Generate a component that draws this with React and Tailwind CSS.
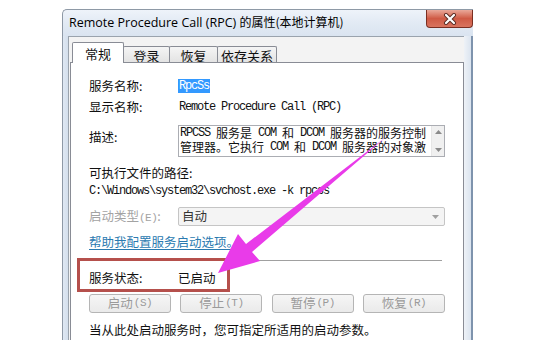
import React from 'react';

const cjkRe = /([\u3000-\u303f\u4e00-\u9fff\uff00-\uffef]+)/;

// SimSun-like mixed text: ascii in mono, cjk runs in the CJK font
const Mixed = ({ text }) =>
    text.split(cjkRe).map((part, i) =>
        cjkRe.test(part) ? (
            <span key={i} className="inline-block h-[14px] align-top font-['Noto_Sans_CJK_SC'] text-[12px] leading-[14px] tracking-normal whitespace-pre">{part}</span>
        ) : (
            <span key={i} className="inline-block h-[14px] align-top leading-[14px] whitespace-pre">{part}</span>
        )
    );

const Tab = ({ label, active, className = '' }) => (
    <div
        className={
            active
                ? `h-[21px] -mb-px flex items-center justify-center bg-white border border-b-0 border-[#898c95] rounded-t-[2px] z-10 ${className}`
                : `h-[17px] mt-[4px] -ml-px flex items-center justify-center bg-gradient-to-b from-[#f5f5f5] to-[#e2e2e2] border border-b-0 border-[#898c95] rounded-t-[2px] ${className}`
        }
    >
        <span className="text-[13px] leading-none text-[#111]">{label}</span>
    </div>
);

const Button = ({ label, hotkey }) => (
    <div className="w-[82px] h-[19px] flex items-center justify-center rounded-[3px] border border-[#b5b5b5] bg-gradient-to-b from-[#f6f6f6] to-[#eaeaea] text-[#9a9a9a]">
        <span className="text-[12.5px] leading-none">{label}</span>
        <span className="font-['Liberation_Mono'] text-[11px] leading-none tracking-[-0.5px] ml-px">({hotkey})</span>
    </div>
);

export default function App() {
    return (
        <div className="relative w-[540px] h-[359px] bg-white overflow-hidden pt-[9px] pl-[62px] font-['Noto_Sans_CJK_SC',sans-serif]">
            {/* window */}
            <div className="w-[411px] h-[331px] flex flex-col">
                {/* title bar */}
                <div className="relative h-[27px] flex items-center pl-[6px] bg-gradient-to-b from-[#eef3fa] via-[#e2eaf4] to-[#dae4f0] border-l border-t border-[#8e99a6] rounded-tl-[5px]">
                    <span className="font-['Open_Sans'] text-[12.5px] text-black whitespace-nowrap">
                        Remote Procedure Call (RPC) <span className="font-['Noto_Sans_CJK_SC'] text-[12px]">的属性(本地计算机)</span>
                    </span>
                    <div className="absolute right-0 top-0 w-[47px] h-[18px] rounded-b-[4px] border border-t-0 border-[#7a2f22] bg-gradient-to-b from-[#e9a89a] via-[#cf5a45] to-[#d9745f] flex items-center justify-center">
                        <svg width="14" height="12" viewBox="0 0 14 12">
                            <path d="M3 2 L11 10 M11 2 L3 10" stroke="#5a2a22" strokeWidth="4" strokeLinecap="round" />
                            <path d="M3 2 L11 10 M11 2 L3 10" stroke="#ffffff" strokeWidth="2.2" strokeLinecap="round" />
                        </svg>
                    </div>
                </div>
                {/* body */}
                <div className="flex flex-1">
                    <div className="w-[6px] bg-gradient-to-r from-[#dfe8f3] to-[#d4dfec] border-l border-[#8e99a6]" />
                    {/* client */}
                    <div className="w-[396px] bg-[#f3f3f3] border-l border-t border-[#9aa3ad] pl-px pt-[5px] flex flex-col">
                        {/* tabs */}
                        <div className="flex items-start pl-[2px] h-[20px]">
                            <Tab label="常规" active className="w-[52px]" />
                            <Tab label="登录" className="w-[47px]" />
                            <Tab label="恢复" className="w-[49px]" />
                            <Tab label="依存关系" className="w-[60px]" />
                        </div>
                        {/* tab page */}
                        <div className="w-[394px] flex-1 bg-white border border-b-0 border-[#898c95] pl-[18px] pt-[15px] flex flex-col text-[12.5px] text-[#111]">
                            <div className="h-[16px] flex items-center">
                                <span className="w-[89px] leading-none">服务名称:</span>
                                <span className="font-['Liberation_Mono'] text-[12px] tracking-[-1.2px] leading-[14px] px-[1px] bg-[#3399ff] text-white">RpcSs</span>
                            </div>
                            <div className="h-[16px] mt-[5px] flex items-center">
                                <span className="w-[89px] leading-none">显示名称:</span>
                                <span className="font-['Liberation_Mono'] text-[12px] tracking-[-1.2px] leading-none pl-px">Remote Procedure Call (RPC)</span>
                            </div>
                            <div className="h-[32px] mt-[10px] flex items-start">
                                <span className="w-[89px] leading-[16px] pt-[4px]">描述:</span>
                                <div className="w-[267px] h-[32px] border border-[#abadb3] flex">
                                    <div className="flex-1 pl-px font-['Liberation_Mono'] text-[12px] tracking-[-1.2px] whitespace-nowrap">
                                        <div className="h-[14px] leading-[14px]"><Mixed text="RPCSS 服务是 COM 和 DCOM 服务器的服务控制" /></div>
                                        <div className="h-[14px] leading-[14px]"><Mixed text="管理器。它执行 COM 和 DCOM 服务器的对象激" /></div>
                                    </div>
                                    <div className="w-[13px] bg-[#f0f0f0] border-l border-[#e6e6e6] flex flex-col items-center justify-between py-[4px]">
                                        <svg width="7" height="4" viewBox="0 0 7 4"><path d="M0 4 L3.5 0 L7 4 Z" fill="#8a8a8a" /></svg>
                                        <svg width="7" height="4" viewBox="0 0 7 4"><path d="M0 0 L3.5 4 L7 0 Z" fill="#8a8a8a" /></svg>
                                    </div>
                                </div>
                            </div>
                            <div className="h-[16px] mt-[8px] flex items-center leading-none">可执行文件的路径:</div>
                            <div className="h-[16px] mt-[2px] flex items-center font-['Liberation_Mono'] text-[12px] tracking-[-1.2px] leading-none whitespace-nowrap">
                                C:\Windows\system32\svchost.exe -k rpcss
                            </div>
                            <div className="h-[19px] mt-[8px] flex items-center">
                                <span className="w-[89px] leading-none text-[#a3a3a3] whitespace-nowrap">
                                    启动类型<span className="font-['Liberation_Mono'] text-[11px] tracking-[-0.5px]">(E)</span>:
                                </span>
                                <div className="w-[267px] h-[19px] border border-[#c5c5c5] rounded-[2px] bg-[#f4f4f4] flex items-center pl-[3px] pr-[5px]">
                                    <span className="flex-1 leading-none text-[#333]">自动</span>
                                    <svg width="7" height="4" viewBox="0 0 7 4"><path d="M0 0 L3.5 4 L7 0 Z" fill="#a0a0a0" /></svg>
                                </div>
                            </div>
                            <div className="h-[16px] mt-[8px] flex items-center">
                                <span className="leading-none text-[#2a7ab0] underline underline-offset-2">帮助我配置服务启动选项。</span>
                            </div>
                            <div className="w-[353px] h-px mt-[10px] bg-[#a0a0a0]" />
                            <div className="h-[16px] mt-[9px] flex items-center">
                                <span className="w-[89px] leading-none">服务状态:</span>
                                <span className="leading-none">已启动</span>
                            </div>
                            <div className="w-[356px] h-[19px] mt-[8px] flex justify-between">
                                <Button label="启动" hotkey="S" />
                                <Button label="停止" hotkey="T" />
                                <Button label="暂停" hotkey="P" />
                                <Button label="恢复" hotkey="R" />
                            </div>
                            <div className="h-[16px] mt-[9px] flex items-center leading-none whitespace-nowrap">
                                当从此处启动服务时，您可指定所适用的启动参数。
                            </div>
                        </div>
                    </div>
                    <div className="w-[9px] bg-gradient-to-r from-[#eef2f7] to-[#dbe4ef] border-r-2 border-[#7e93ad]" />
                </div>
            </div>

            {/* red highlight box */}
            <div className="absolute left-[77px] top-[258px] w-[153px] h-[34px] border-[3px] border-[#b5504c]" />

            {/* magenta arrow */}
            <svg className="absolute left-0 top-0 pointer-events-none" width="540" height="359" viewBox="0 0 540 359">
                <polygon points="386,137 252,252 260,261 218,273 238,234 246,244" fill="#e93be9" />
            </svg>
        </div>
    );
}
